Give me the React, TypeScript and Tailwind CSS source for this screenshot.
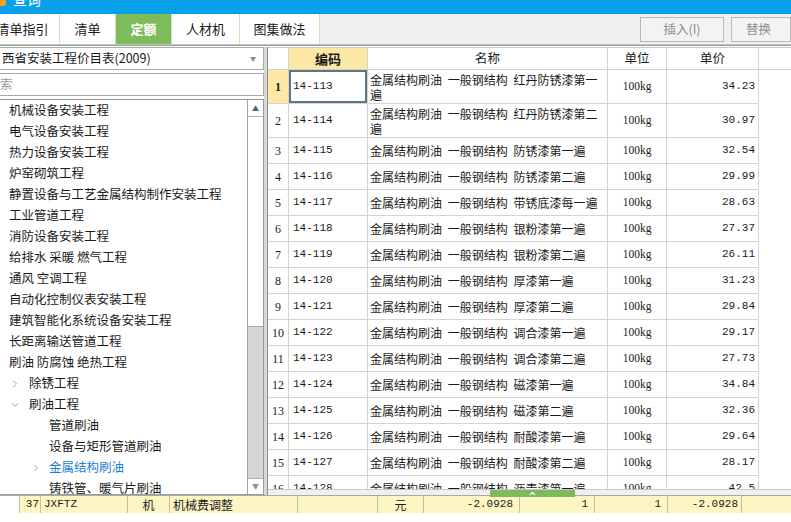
import { ChevronRight, ChevronDown, ChevronUp } from 'lucide-react';

const cjk = { fontFamily: '"Noto Sans CJK SC", sans-serif' };
const mono = { fontFamily: '"Liberation Mono", "Noto Sans CJK SC", monospace' };

const rows = [
    ['14-113', '金属结构刷油 一般钢结构 红丹防锈漆第一|遍', '34.23'],
    ['14-114', '金属结构刷油 一般钢结构 红丹防锈漆第二|遍', '30.97'],
    ['14-115', '金属结构刷油 一般钢结构 防锈漆第一遍', '32.54'],
    ['14-116', '金属结构刷油 一般钢结构 防锈漆第二遍', '29.99'],
    ['14-117', '金属结构刷油 一般钢结构 带锈底漆每一遍', '28.63'],
    ['14-118', '金属结构刷油 一般钢结构 银粉漆第一遍', '27.37'],
    ['14-119', '金属结构刷油 一般钢结构 银粉漆第二遍', '26.11'],
    ['14-120', '金属结构刷油 一般钢结构 厚漆第一遍', '31.23'],
    ['14-121', '金属结构刷油 一般钢结构 厚漆第二遍', '29.84'],
    ['14-122', '金属结构刷油 一般钢结构 调合漆第一遍', '29.17'],
    ['14-123', '金属结构刷油 一般钢结构 调合漆第二遍', '27.73'],
    ['14-124', '金属结构刷油 一般钢结构 磁漆第一遍', '34.84'],
    ['14-125', '金属结构刷油 一般钢结构 磁漆第二遍', '32.36'],
    ['14-126', '金属结构刷油 一般钢结构 耐酸漆第一遍', '29.64'],
    ['14-127', '金属结构刷油 一般钢结构 耐酸漆第二遍', '28.17'],
    ['14-128', '金属结构刷油 一般钢结构 沥青漆第一遍', '42.5'],
];

// level 0 = top, 1 = with chevron, 2 = leaf under 刷油工程
const tree: { t: string; lv: number; ch?: 'r' | 'd'; active?: boolean }[] = [
    { t: '机械设备安装工程', lv: 0 },
    { t: '电气设备安装工程', lv: 0 },
    { t: '热力设备安装工程', lv: 0 },
    { t: '炉窑砌筑工程', lv: 0 },
    { t: '静置设备与工艺金属结构制作安装工程', lv: 0 },
    { t: '工业管道工程', lv: 0 },
    { t: '消防设备安装工程', lv: 0 },
    { t: '给排水 采暖 燃气工程', lv: 0 },
    { t: '通风 空调工程', lv: 0 },
    { t: '自动化控制仪表安装工程', lv: 0 },
    { t: '建筑智能化系统设备安装工程', lv: 0 },
    { t: '长距离输送管道工程', lv: 0 },
    { t: '刷油 防腐蚀 绝热工程', lv: 0 },
    { t: '除锈工程', lv: 1, ch: 'r' },
    { t: '刷油工程', lv: 1, ch: 'd' },
    { t: '管道刷油', lv: 2 },
    { t: '设备与矩形管道刷油', lv: 2 },
    { t: '金属结构刷油', lv: 2, ch: 'r', active: true },
    { t: '铸铁管、暖气片刷油', lv: 2 },
];

const tabs = ['清单', '定额', '人材机', '图集做法'];

export default function App() {
    return (
        <div className="relative w-[791px] h-[522px] overflow-hidden bg-white flex flex-col text-[12px] text-[#1a1a1a]" style={cjk}>
            {/* title bar */}
            <div className="h-[14px] shrink-0 bg-[#08a0e8] overflow-hidden flex items-start">
                <div className="-mt-[9px] flex items-center gap-[7px]">
                    <div className="w-[14px] h-[14px] rounded-[2px] bg-[#f7a21b] -ml-[8px]" />
                    <span className="text-white text-[14px] leading-[16px]">查询</span>
                </div>
            </div>

            {/* tabs */}
            <div className="h-[30px] shrink-0 flex bg-[#f0f0f0]">
                <div className="-ml-[14px] w-[74px] bg-white border-r border-[#cde0c4] flex items-center justify-center text-[13px]">清单指引</div>
                {tabs.map((t, i) => (
                    <div
                        key={t}
                        className={`${i === 0 ? 'w-[56px]' : i === 1 ? 'w-[56px]' : i === 2 ? 'w-[68px]' : 'w-[80px]'} border-r border-[#cde0c4] flex items-center justify-center text-[13px] ${t === '定额' ? 'bg-[#7dbb5b] text-white font-bold' : 'bg-white'}`}
                    >
                        {t}
                    </div>
                ))}
                <div className="flex-1" />
                <div className="mt-[3px] h-[25px] w-[84px] border border-[#b9b9b9] bg-[#f3f3f3] text-[#8c8c8c] text-[12.5px] flex items-center justify-center">插入(I)</div>
                <div className="mt-[3px] ml-[7px] h-[25px] w-[60px] border border-[#b9b9b9] bg-[#f3f3f3] text-[#8c8c8c] text-[12.5px] flex items-center pl-[14px] shrink-0">替换</div>
            </div>
            <div className="h-[1px] shrink-0 bg-[#b7cdb0]" />
            <div className="h-[1px] shrink-0 bg-[#9c9c9c]" />
            <div className="h-[1px] shrink-0 bg-white" />

            {/* main */}
            <div className="h-[448px] shrink-0 flex">
                {/* left */}
                <div className="w-[264px] flex flex-col">
                    <div className="h-[23px] border border-[#a9a9a9] -ml-[1px] flex items-center pl-[2px] pr-[7px] bg-white">
                        <span className="flex-1 text-[12.5px]">西省安装工程价目表(2009)</span>
                        <span className="text-[#8a8a8a] text-[6px]">▼</span>
                    </div>
                    <div className="mt-[3px] h-[23px] border border-[#a9a9a9] -ml-[1px] flex items-center text-[#9a9a9a] text-[12.5px]">索</div>
                    <div className="mt-[3px] flex-1 border border-[#9a9a9a] -ml-[1px] flex overflow-hidden">
                        <div className="flex-1 overflow-hidden">
                            {tree.map((n) => (
                                <div key={n.t} className="h-[21px] flex items-center whitespace-nowrap text-[12.5px]">
                                    {n.lv === 0 && <span className="ml-[9px]">{n.t}</span>}
                                    {n.lv === 1 && (
                                        <>
                                            <span className="ml-[9px] w-[20px] flex items-center text-[#8a8a8a]">
                                                {n.ch === 'd' ? <ChevronDown size={12} strokeWidth={1.6} /> : <ChevronRight size={12} strokeWidth={1.6} />}
                                            </span>
                                            <span>{n.t}</span>
                                        </>
                                    )}
                                    {n.lv === 2 && (
                                        <>
                                            <span className="ml-[30px] w-[19px] flex items-center text-[#8a8a8a]">
                                                {n.ch === 'r' && <ChevronRight size={12} strokeWidth={1.6} />}
                                            </span>
                                            <span className={n.active ? 'text-[#1a7fd6]' : ''}>{n.t}</span>
                                        </>
                                    )}
                                </div>
                            ))}
                        </div>
                        {/* scrollbar */}
                        <div className="w-[16px] flex flex-col border-l border-[#a0a0a0] bg-[#d6d6d6]">
                            <div className="h-[17px] bg-white border-b border-[#b0b0b0] flex items-center justify-center text-[#606060] text-[7px]">▲</div>
                            <div className="h-[210px] bg-white border-b border-[#a8a8a8]" />
                            <div className="flex-1" />
                            <div className="h-[16px] bg-white border-t border-[#b0b0b0] flex items-center justify-center text-[#909090] text-[7px]">▼</div>
                        </div>
                    </div>
                </div>

                {/* splitter */}
                <div className="w-[4px] bg-[#d8d8d8] border-r border-[#8c8c8c]" />

                {/* right: table */}
                <div className="flex-1 flex flex-col">
                    <div className="h-[443px] overflow-hidden border-b border-[#9a9a9a] border-t border-[#c8c8c8]">
                        <div className="flex h-[22px] border-b border-[#cfcfcf]">
                            <div className="w-[21px] border-r border-[#d4d4d4]" />
                            <div className="w-[79px] border-r border-[#d4d4d4] bg-[#fde8a6] font-bold flex items-center justify-center text-[13px]">编码</div>
                            <div className="w-[240px] border-r border-[#d4d4d4] flex items-center justify-center text-[12.5px]">名称</div>
                            <div className="w-[59px] border-r border-[#d4d4d4] flex items-center justify-center text-[12.5px]">单位</div>
                            <div className="w-[92px] border-r border-[#d4d4d4] flex items-center justify-center text-[12.5px]">单价</div>
                        </div>
                        {rows.map(([code, name, price], i) => {
                            const sel = i === 0;
                            const lines = name.split('|');
                            return (
                                <div key={code} className={`flex ${i < 2 ? 'h-[34px]' : 'h-[26px]'}`}>
                                    <div
                                        className={`w-[21px] border-r border-b border-[#d4d4d4] flex items-center justify-center text-[12px] ${sel ? 'bg-[#fde8a6] font-bold' : ''}`}
                                        style={{ fontFamily: '"Liberation Serif", serif' }}
                                    >
                                        {i + 1}
                                    </div>
                                    <div
                                        className={`w-[79px] border-r border-b border-[#d4d4d4] flex items-center pl-[4px] text-[11px] ${sel ? 'shadow-[inset_0_0_0_2px_#5d7482]' : ''}`}
                                        style={mono}
                                    >
                                        {code}
                                    </div>
                                    <div className="w-[240px] border-r border-b border-[#d4d4d4] flex flex-col justify-center pl-[2px] text-[12px] leading-[15px] whitespace-nowrap [word-spacing:3px]">
                                        {lines.map((l) => (
                                            <span key={l}>{l}</span>
                                        ))}
                                    </div>
                                    <div className="w-[59px] border-r border-b border-[#d4d4d4] flex items-center justify-center text-[11.5px]" style={{ fontFamily: '"Liberation Serif", serif' }}>
                                        100kg
                                    </div>
                                    <div className="w-[92px] border-r border-b border-[#d4d4d4] flex items-center justify-end pr-[3px] text-[11px]" style={mono}>
                                        {price}
                                    </div>
                                </div>
                            );
                        })}
                    </div>
                    <div className="flex-1 bg-[#f0f0f0]" />
                </div>
            </div>

            {/* splitter handle */}
            <div className="absolute left-[490px] top-[490px] w-[85px] h-[7px] bg-[#7dbb5b] flex items-center justify-center text-white">
                <ChevronUp size={9} strokeWidth={3} />
            </div>

            {/* bottom strip */}
            <div className="h-[18px] shrink-0 flex border-t border-[#a8a8a8] text-[12px]">
                <div className="w-[20px] bg-white border-r border-[#c6c0a0]" />
                <div className="flex-1 flex bg-[#fdf6c4]" style={mono}>
                    <div className="w-[21px] border-r border-[#c6c0a0] flex items-center justify-end pr-[1px] text-[11px]">37</div>
                    <div className="w-[87px] border-r border-[#c6c0a0] flex items-center pl-[3px] text-[11px]">JXFTZ</div>
                    <div className="w-[42px] border-r border-[#c6c0a0] flex items-center justify-center" style={cjk}>机</div>
                    <div className="w-[128px] border-r border-[#c6c0a0] flex items-center pl-[3px]" style={cjk}>机械费调整</div>
                    <div className="w-[80px] border-r border-[#c6c0a0]" />
                    <div className="w-[46px] border-r border-[#c6c0a0] flex items-center justify-center" style={cjk}>元</div>
                    <div className="w-[96px] border-r border-[#c6c0a0] flex items-center justify-end pr-[6px] text-[11px]">-2.0928</div>
                    <div className="w-[75px] border-r border-[#c6c0a0] flex items-center justify-end pr-[6px] text-[11px]">1</div>
                    <div className="w-[73px] border-r border-[#c6c0a0] flex items-center justify-end pr-[6px] text-[11px]">1</div>
                    <div className="w-[74px] border-r border-[#c6c0a0] flex items-center justify-end pr-[3px] text-[11px]">-2.0928</div>
                    <div className="flex-1" />
                </div>
            </div>
            <div className="flex-1 bg-white" />
        </div>
    );
}
